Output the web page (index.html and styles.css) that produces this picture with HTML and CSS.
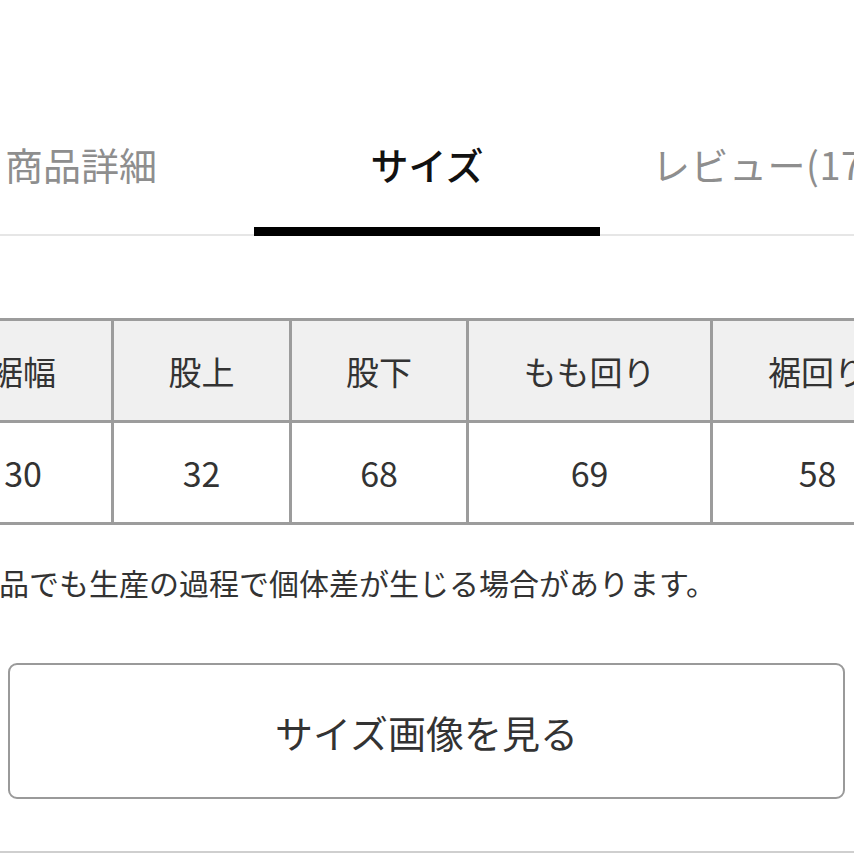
FILE: index.html
```html
<!DOCTYPE html>
<html lang="ja">
<head>
<meta charset="utf-8">
<link rel="stylesheet" href="styles.css">
</head>
<body>
<div class="page">
  <nav class="tabs">
    <div class="tab">商品詳細</div>
    <div class="tab active">サイズ</div>
    <div class="tab review">レビュー(17)</div>
  </nav>
  <table class="size-table">
    <colgroup>
      <col class="c1"><col class="c2"><col class="c3"><col class="c4"><col class="c5">
    </colgroup>
    <thead>
      <tr><th>裾幅</th><th>股上</th><th>股下</th><th>もも回り</th><th>裾回り</th></tr>
    </thead>
    <tbody>
      <tr><td>30</td><td>32</td><td>68</td><td>69</td><td>58</td></tr>
    </tbody>
  </table>
  <p class="note">同じ商品でも生産の過程で個体差が生じる場合があります。</p>
  <div class="btn-wrap">
    <button class="size-btn">サイズ画像を見る</button>
  </div>
  <div class="bottom-line"></div>
</div>
</body>
</html>
```
FILE: styles.css
```css
html, body {
  margin: 0;
  padding: 0;
  background: #fff;
  overflow: hidden;
}
body {
  font-family: "Noto Sans CJK JP", "Noto Sans", sans-serif;
  color: #333;
}
.page {
  width: 854px;
  height: 854px;
  overflow: hidden;
}
.tabs {
  display: flex;
  margin-left: -92px;
  width: 1100px;
  border-bottom: 2px solid #e6e6e6;
}
.tab {
  flex: 0 0 346px;
  box-sizing: border-box;
  padding-top: 140px;
  height: 236px;
  margin-bottom: -2px;
  font-size: 38px;
  line-height: 48px;
  text-align: center;
  color: #8e8e8e;
  white-space: nowrap;
}
.tab.review {
  padding-right: 18px;
  letter-spacing: 0.5px;
}
.tab.active {
  color: #111;
  font-weight: 500;
  border-bottom: 9px solid #000;
}
.size-table {
  margin-top: 82px;
  margin-left: -68px;
  border-collapse: collapse;
  table-layout: fixed;
  width: 990px;
}
.c1 { width: 179px; }
.c2 { width: 178px; }
.c3 { width: 177px; }
.c4 { width: 244px; }
.c5 { width: 212px; }
.size-table th,
.size-table td {
  border: 3px solid #9c9c9c;
  height: 99px;
  padding: 0;
  text-align: center;
  font-size: 33px;
  font-weight: 400;
  color: #333;
  white-space: nowrap;
}
.size-table th {
  background: #f0f0f0;
}
.size-table td {
  background: #fff;
  font-size: 34px;
}
.note {
  margin: 37px 0 0 -91px;
  font-size: 30px;
  line-height: 40px;
  white-space: nowrap;
  color: #333;
}
.btn-wrap {
  padding: 61px 9px 0 8px;
}
.size-btn {
  display: block;
  width: 100%;
  height: 136px;
  box-sizing: border-box;
  border: 2px solid #9a9a9a;
  border-radius: 9px;
  background: #fff;
  font-family: "Noto Sans CJK JP", "Noto Sans", sans-serif;
  font-size: 38px;
  color: #333;
  padding: 0;
}
.bottom-line {
  margin-top: 52px;
  height: 2px;
  background: #cfcfcf;
}
```
